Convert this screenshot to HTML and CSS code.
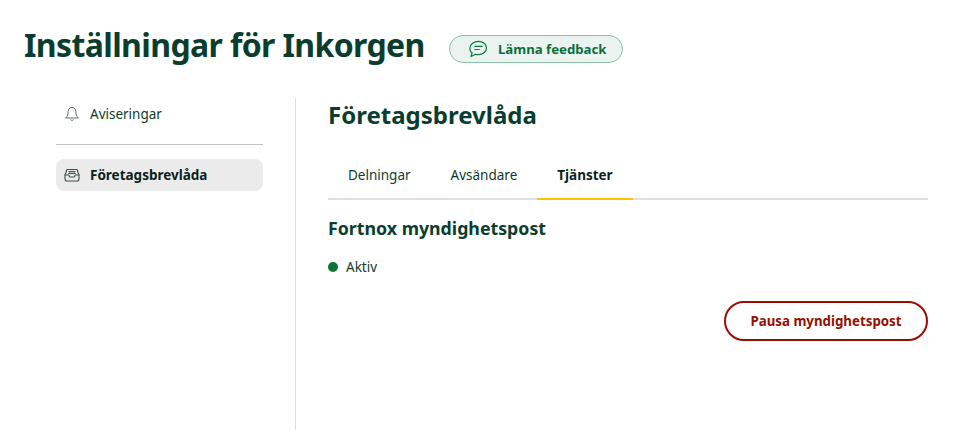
FILE: index.html
```html
<html>
    <head>
        <meta charset="utf-8" />
        <title>Inställningar för Inkorgen</title>
        <link rel="stylesheet" href="styles.css">
    </head>
    <body>
        <div class="container">
            <div class="header">
                <h1>Inställningar för Inkorgen</h1>
                <button type="button" class="feedback">
                    <svg width="20" height="20" viewBox="0 0 20 20" fill="none" stroke="#0b7a3e" stroke-width="1.2" stroke-linecap="round" stroke-linejoin="round">
                        <path d="M10.5 2.300c4.300 0 8 2.900 8 6.700s-3.700 6.700-8 6.700c-1 0-2-.2-2.900-.5l-4.600 2.300 1.100-3.800C2.700 13.300 1.900 11.300 1.900 9c0-3.800 4.300-6.700 8.600-6.700z" />
                        <path d="M6.800 7.300h7.400M6.800 10.500h4.400" />
                    </svg>
                    <span>Lämna feedback</span>
                </button>
            </div>
            <div class="main">
                <div class="sidebar">
                    <a href="#" class="side-link">
                        <svg width="16" height="16" viewBox="0 0 16 16" fill="none" stroke="#5c6f68" stroke-width="1" stroke-linejoin="round" stroke-linecap="round">
                            <path d="M8 1.500c-2.500 0-3.900 1.900-3.900 4.200 0 3.300-.7 4.700-2.400 6.300h12.600c-1.700-1.600-2.400-3-2.400-6.300C11.900 3.400 10.500 1.500 8 1.500z" />
                            <path d="M6.800 13.700c.3.600.7.800 1.200.8s.9-.2 1.200-.8" />
                        </svg>
                        <span>Aviseringar</span>
                    </a>
                    <div class="side-line"></div>
                    <a href="#" class="side-link active">
                        <svg width="16" height="16" viewBox="0 0 16 16" fill="none" stroke="#3f544c" stroke-width="1.1" stroke-linejoin="round" stroke-linecap="round">
                            <path d="M3 2.500h10l2 5.500v4a2 2 0 0 1-2 2H3a2 2 0 0 1-2-2V8z" />
                            <path d="M1 8h3.800l1 2h4.400l1-2H15" />
                            <path d="M5 4.600h6M4.500 6.500h7" />
                        </svg>
                        <span>Företagsbrevlåda</span>
                    </a>
                </div>
                <div class="content">
                    <h2>Företagsbrevlåda</h2>
                    <div class="tabs">
                        <a href="#" class="tab">Delningar</a>
                        <a href="#" class="tab">Avsändare</a>
                        <a href="#" class="tab selected">Tjänster</a>
                    </div>
                    <h3>Fortnox myndighetspost</h3>
                    <div class="status">
                        <span class="dot"></span>
                        <span>Aktiv</span>
                    </div>
                    <div class="actions">
                        <button type="button" class="pause">Pausa myndighetspost</button>
                    </div>
                </div>
            </div>
        </div>
    </body>
</html>
```
FILE: styles.css
```css
html, body{
    margin: 0;
    height: 100%;
    overflow: hidden;
    background-color: #fff;
}

body{
    font-family: "Noto Sans", sans-serif;
    color: #0d3b2e;
}

.container{
    width: 978px;
    height: 430px;
    padding: 24px 50px 0 24px;
    box-sizing: border-box;
    display: flex;
    flex-direction: column;
}

.header{
    display: flex;
    align-items: flex-start;
    gap: 24px;
    height: 44px;
}

h1{
    margin: -1px 0 0;
    font-size: 32px;
    line-height: 44px;
    font-weight: 700;
    letter-spacing: -0.62px;
    color: #0a3d2e;
}

.feedback{
    display: flex;
    align-items: center;
    justify-content: center;
    gap: 10px;
    width: 174px;
    height: 28px;
    margin-top: 11px;
    padding: 0 0 0 3px;
    border: 1px solid #8cc0a2;
    border-radius: 14px;
    background-color: #ebf3f0;
    color: #0b6e3c;
    font-family: inherit;
    font-size: 13.200px;
    font-weight: 700;
}

.main{
    display: flex;
    flex: 1;
    margin-top: 30px;
}

.sidebar{
    width: 207px;
    margin-left: 32px;
    padding-right: 32px;
    border-right: 1px solid #dcdfde;
}

.side-link{
    display: flex;
    align-items: center;
    gap: 10px;
    height: 32px;
    padding-left: 8px;
    border-radius: 8px;
    color: #0d3b2e;
    font-size: 13.500px;
    text-decoration: none;
}

.side-link.active{
    background-color: #ebebeb;
    color: #0c1f1a;
    font-weight: 700;
}

.side-line{
    height: 1px;
    margin: 14px 0;
    background-color: #bfc6c3;
}

.content{
    flex: 1;
    padding-left: 32px;
}

h2{
    margin: -1px 0 0;
    font-size: 24px;
    line-height: 36px;
    font-weight: 700;
    color: #0a3d2e;
}

.tabs{
    display: flex;
    margin-top: 19px;
    border-bottom: 2px solid #dde1df;
}

.tab{
    padding: 0 20px;
    height: 48px;
    line-height: 46px;
    box-sizing: border-box;
    margin-bottom: -2px;
    font-size: 13.500px;
    color: #0d3b2e;
    text-decoration: none;
}

.tab.selected{
    border-bottom: 2px solid #fcc200;
    color: #0c1f1a;
    font-weight: 700;
}

h3{
    margin: 15px 0 0;
    font-size: 17.750px;
    line-height: 26px;
    font-weight: 700;
    color: #0a3d2e;
}

.status{
    display: flex;
    align-items: center;
    gap: 8px;
    margin-top: 15px;
    height: 22px;
    font-size: 13.500px;
}

.dot{
    width: 10px;
    height: 10px;
    border-radius: 50%;
    background-color: #0b7339;
}

.actions{
    display: flex;
    justify-content: flex-end;
    margin-top: 23px;
}

.pause{
    width: 204px;
    height: 40px;
    padding: 0;
    border: 2px solid #990e00;
    border-radius: 20px;
    background-color: #fff;
    color: #990e00;
    font-family: inherit;
    font-size: 13.300px;
    font-weight: 700;
}
```
